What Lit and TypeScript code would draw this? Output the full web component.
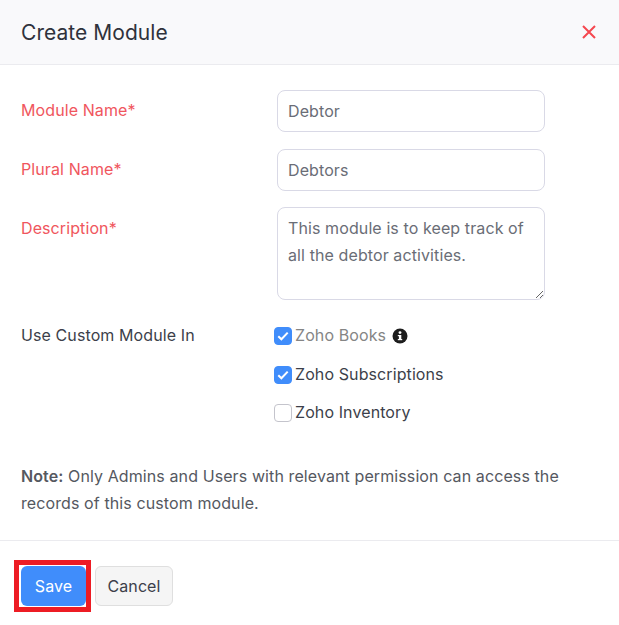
import { LitElement, html, css } from 'lit';
import { customElement, state } from 'lit/decorators.js';

interface ModuleOption {
  label: string;
  checked: boolean;
  muted?: boolean;
  info?: boolean;
}

@customElement('app-root')
export class AppRoot extends LitElement {
  @state()
  private options: ModuleOption[] = [
    { label: 'Zoho Books', checked: true, muted: true, info: true },
    { label: 'Zoho Subscriptions', checked: true },
    { label: 'Zoho Inventory', checked: false },
  ];

  static styles = css`
    :host {
      display: block;
      width: 619px;
      height: 625px;
      overflow: hidden;
      background: #fff;
      font-family: 'Inter', 'Liberation Sans', sans-serif;
      font-size: 16px;
      letter-spacing: 0.1px;
      color: #3c3f4a;
    }

    .header {
      display: flex;
      align-items: center;
      justify-content: space-between;
      height: 64px;
      padding: 0 23px 0 21px;
      background: #f9f9fb;
      border-bottom: 1px solid #ebebef;
    }

    .title {
      font-size: 21px;
      font-weight: 400;
      letter-spacing: 0.05px;
      color: #2f323c;
      margin: 0;
    }

    .close {
      display: block;
      width: 14px;
      height: 14px;
    }

    .form {
      display: grid;
      grid-template-columns: 256px 268px;
      padding: 25px 0 0 21px;
    }

    .label {
      line-height: 40px;
      height: 42px;
    }

    .required {
      color: #f0565d;
    }

    .field {
      box-sizing: border-box;
      display: block;
      width: 268px;
      height: 42px;
      margin-bottom: 17px;
      padding: 0 10px;
      border: 1px solid #d9d9e6;
      border-radius: 8px;
      outline: none;
      background: #fff;
      font: inherit;
      letter-spacing: inherit;
      color: #6a6d76;
    }

    textarea.field {
      height: 93px;
      margin: -1px 0 0;
      padding: 7px 10px;
      line-height: 27px;
    }

    .use-label {
      margin-top: 25px;
      line-height: 20px;
    }

    .options {
      display: flex;
      flex-direction: column;
      gap: 18.5px;
      margin: 26px 0 0 -3px;
    }

    .option {
      display: flex;
      align-items: center;
      gap: 3px;
      height: 20px;
      line-height: 20px;
      color: #3c3f4a;
    }

    .option.muted {
      color: #858585;
    }

    .text {
      margin-bottom: 2px;
    }

    .box {
      box-sizing: border-box;
      display: flex;
      align-items: center;
      justify-content: center;
      width: 18px;
      height: 18px;
      border: 1px solid #c4c4cc;
      border-radius: 4px;
      background: #fff;
    }

    .box.checked {
      border-color: #408dfb;
      background: #408dfb;
    }

    .info {
      display: block;
      width: 16px;
      height: 16px;
      margin-left: 3px;
    }

    .note {
      margin: 40px 0 0;
      padding: 0 21px;
      line-height: 27px;
      color: #55585f;
    }

    .note b {
      font-weight: 600;
    }

    .footer {
      display: flex;
      align-items: center;
      gap: 4px;
      margin-top: 23px;
      padding: 19px 14px 0;
      border-top: 1px solid #ebebef;
    }

    .highlight {
      padding: 1px 0 1px 2px;
      border: 5px solid #ed1c24;
      display: flex;
    }

    button {
      box-sizing: border-box;
      height: 40px;
      border-radius: 6px;
      font: inherit;
      letter-spacing: inherit;
    }

    .save {
      width: 65px;
      border: none;
      background: #408dfb;
      color: #fff;
    }

    .cancel {
      width: 78px;
      border: 1px solid #dfdfdf;
      background: #f5f5f5;
      color: #3c3f4a;
    }
  `;

  private renderOption(option: ModuleOption) {
    return html`
      <div class="option ${option.muted ? 'muted' : ''}">
        <span class="box ${option.checked ? 'checked' : ''}">
          ${option.checked
            ? html`<svg width="12" height="10" viewBox="0 0 12 10" fill="none">
                <path d="M1.3 5.2 4.4 8.3 10.7 1.6" stroke="#fff" stroke-width="2" />
              </svg>`
            : ''}
        </span>
        <span class="text">${option.label}</span>
        ${option.info
          ? html`<svg class="info" viewBox="0 0 16 16">
              <circle cx="8" cy="8" r="7.5" fill="#1d1d1d" />
              <rect x="6.9" y="7" width="2.4" height="5" fill="#fff" />
              <rect x="5.8" y="7" width="2" height="1.2" fill="#fff" />
              <rect x="5.8" y="11" width="4.4" height="1.2" fill="#fff" />
              <circle cx="8" cy="4.6" r="1.4" fill="#fff" />
            </svg>`
          : ''}
      </div>
    `;
  }

  render() {
    return html`
      <div class="header">
        <h2 class="title">Create Module</h2>
        <svg class="close" viewBox="0 0 14 14">
          <path d="M1 1 13 13M13 1 1 13" stroke="#f5474f" stroke-width="2" />
        </svg>
      </div>

      <div class="form">
        <div class="label required">Module Name*</div>
        <input class="field" .value="${'Debtor'}" />

        <div class="label required">Plural Name*</div>
        <input class="field" .value="${'Debtors'}" />

        <div class="label required">Description*</div>
        <textarea
          class="field"
          .value="${'This module is to keep track of all the debtor activities.'}"
        ></textarea>

        <div class="use-label">Use Custom Module In</div>
        <div class="options">${this.options.map((o) => this.renderOption(o))}</div>
      </div>

      <p class="note">
        <b>Note:</b> Only Admins and Users with relevant permission can access the records of this
        custom module.
      </p>

      <div class="footer">
        <div class="highlight"><button class="save">Save</button></div>
        <button class="cancel">Cancel</button>
      </div>
    `;
  }
}
